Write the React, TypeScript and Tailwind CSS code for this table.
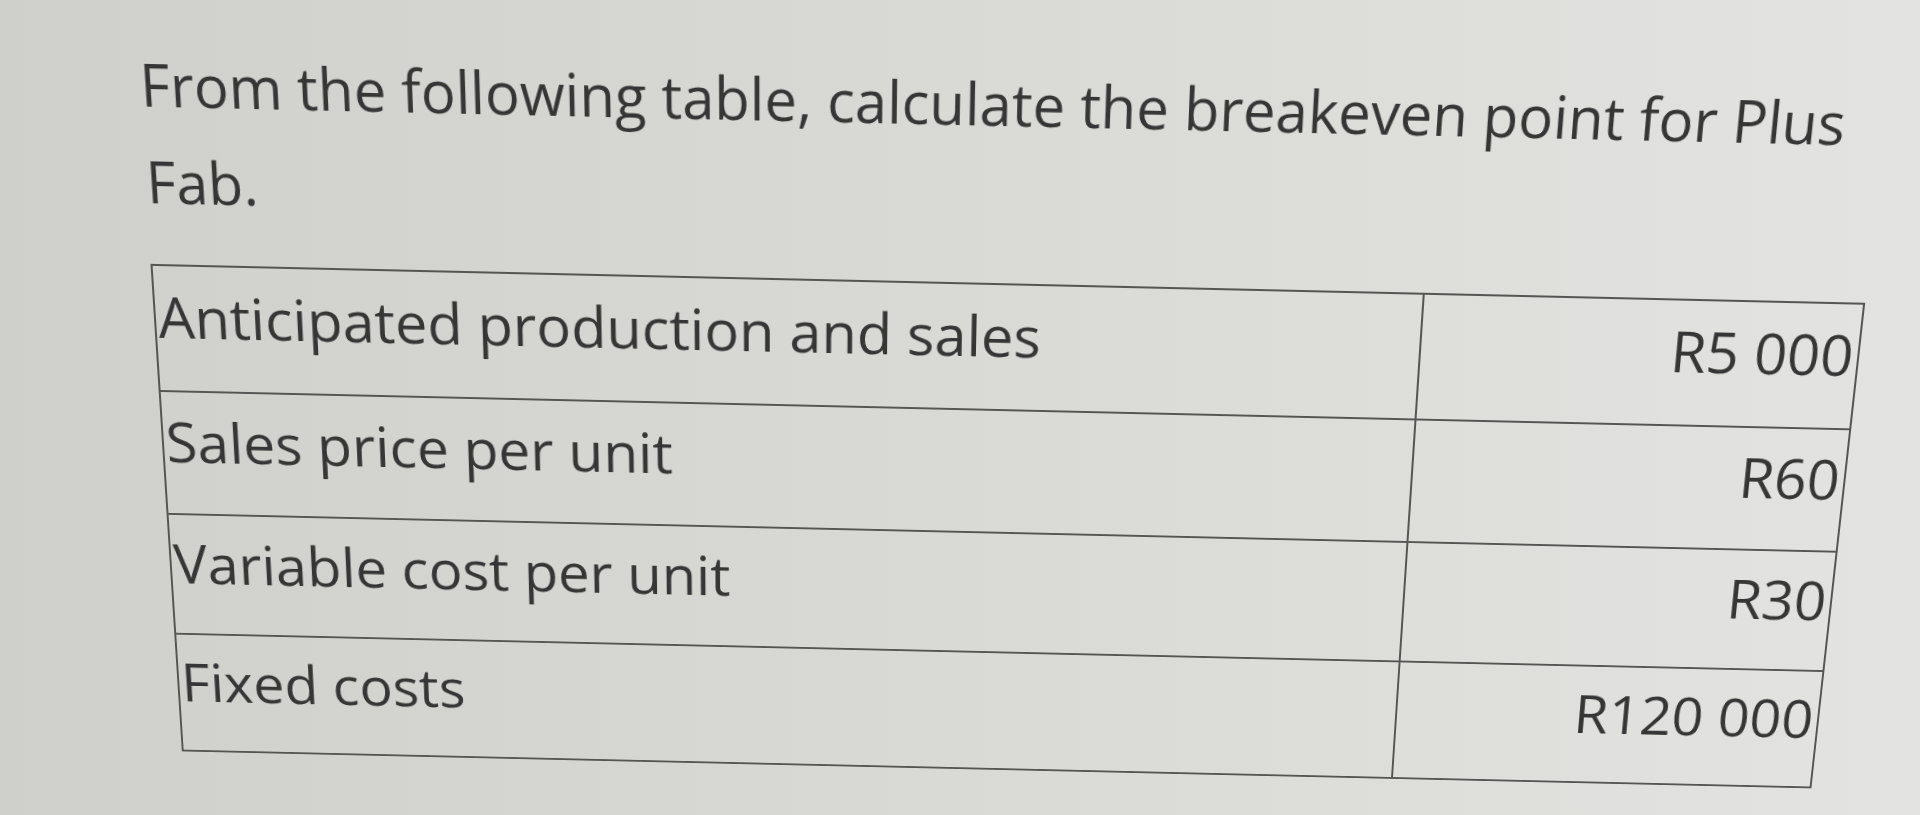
const rows = [
  { label: "Anticipated production and sales", value: "R5 000" },
  { label: "Sales price per unit", value: "R60" },
  { label: "Variable cost per unit", value: "R30" },
  { label: "Fixed costs", value: "R120 000" },
];

export default function App() {
  return (
    <div className="relative h-[815px] w-full overflow-hidden bg-linear-to-r from-[#cfcfcb] via-[#d9d9d5] to-[#e3e3e1] font-['Open_Sans',sans-serif] text-[#363636]">
      {/* photo was taken at an angle, so the page is tilted a little */}
      <div className="h-[815px] w-[1920px] origin-[1000px_450px] pl-[161px] pt-[58px] [transform:perspective(2400px)_rotate(1.3deg)_rotateX(-14deg)]">
        <p className="w-[1720px] pl-[1px] text-[56px] leading-[94px]">
          From the following table, calculate the breakeven point for Plus Fab.
        </p>

        <table className="mt-[35px] w-[1686px] border-collapse border-2 border-[#555553]">
          <tbody>
            {rows.map((r) => (
              <tr key={r.label} className="h-[127px] border-b-2 border-[#555553]">
                <td className="w-[1251px] border-r-2 border-[#555553] pl-[2px] pt-[8px] align-top text-[57px] leading-normal">
                  {r.label}
                </td>
                <td className="pr-[4px] pt-[8px] text-right align-top text-[57px] leading-normal">
                  {r.value}
                </td>
              </tr>
            ))}
          </tbody>
        </table>
      </div>
    </div>
  );
}
